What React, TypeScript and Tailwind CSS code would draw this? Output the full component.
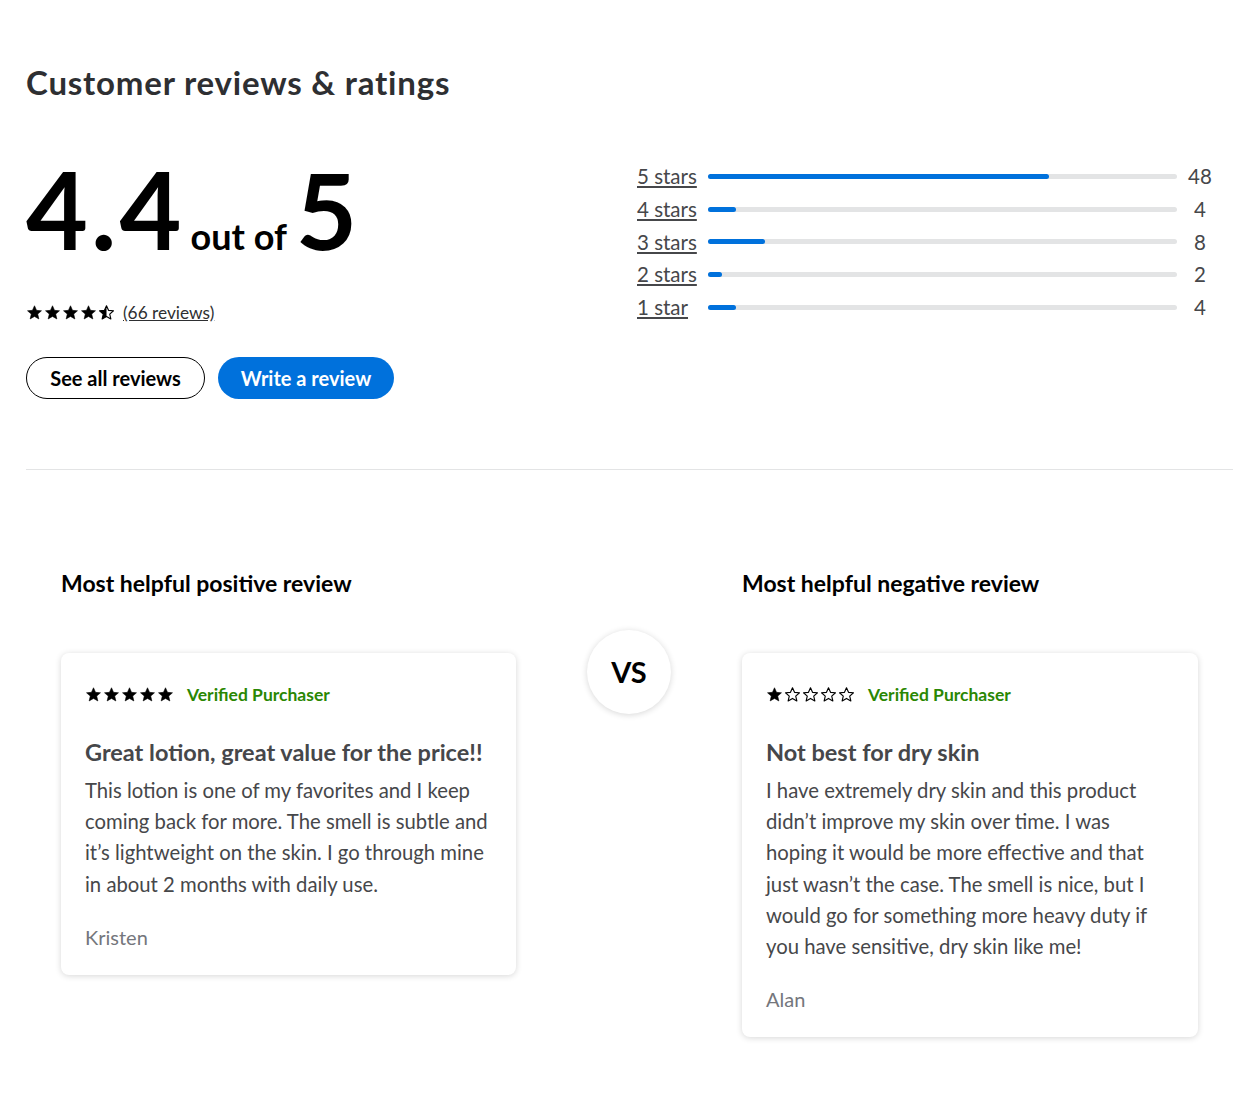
import React from "react";

const STAR = "M12 2.5l2.85 6.45 7.02.64-5.32 4.66 1.6 6.88L12 17.5l-6.15 3.63 1.6-6.88L2.13 9.59l7.02-.64z";

function Star({ type, size }: { type: "full" | "half" | "empty"; size: number }) {
  const id = React.useId();
  return (
    <svg width={size} height={size} viewBox="0 0 24 24" className="shrink-0">
      {type === "half" && (
        <defs>
          <clipPath id={id}>
            <rect x="0" y="0" width="12" height="24" />
          </clipPath>
        </defs>
      )}
      {type === "full" && <path d={STAR} fill="#000" stroke="#000" strokeWidth="0.8" strokeLinejoin="round" />}
      {type === "empty" && <path d={STAR} fill="none" stroke="#000" strokeWidth="1.6" strokeLinejoin="round" />}
      {type === "half" && (
        <>
          <path d={STAR} fill="none" stroke="#000" strokeWidth="1.6" strokeLinejoin="round" />
          <path d={STAR} fill="#000" clipPath={`url(#${id})`} />
        </>
      )}
    </svg>
  );
}

function Stars({ types, size }: { types: ("full" | "half" | "empty")[]; size: number }) {
  return (
    <div className="flex items-center gap-[1px]">
      {types.map((t, i) => (
        <Star key={i} type={t} size={size} />
      ))}
    </div>
  );
}

const rows = [
  { label: "5 stars", count: 48 },
  { label: "4 stars", count: 4 },
  { label: "3 stars", count: 8 },
  { label: "2 stars", count: 2 },
  { label: "1 star", count: 4 },
];

function ReviewCard({
  stars,
  title,
  body,
  author,
}: {
  stars: ("full" | "half" | "empty")[];
  title: string;
  body: string;
  author: string;
}) {
  return (
    <div className="rounded-lg bg-white px-6 pt-[32px] pb-[24px] shadow-[0_1px_6px_rgba(0,0,0,0.16)]">
      <div className="flex h-[20px] items-center gap-[13px]">
        <Stars types={stars} size={17} />
        <span className="text-[17.5px] font-bold leading-[20px] text-[#2a8703]">Verified Purchaser</span>
      </div>
      <h3 className="mt-[32px] text-[23.5px] font-bold leading-[30px] text-[#46474a]">{title}</h3>
      <p className="mt-[8px] text-[20.3px] leading-[31.2px] text-[#46474a]">{body}</p>
      <div className="mt-[23px] text-[20px] leading-[28px] text-[#74767c]">{author}</div>
    </div>
  );
}

export default function App() {
  return (
    <div className="min-h-[1094px] bg-white px-[26px] pt-[60px] text-[#2e2f32]" style={{ fontFamily: "Lato, 'Open Sans', sans-serif" }}>
      <h1 className="text-[33px] font-bold leading-[44px] tracking-[0.8px] text-[#2e2f32]">Customer reviews &amp; ratings</h1>

      <div className="mt-[55px] flex justify-between">
        <div>
          <div className="flex items-baseline text-black">
            <span className="text-[107px] font-bold leading-[100px] tracking-[3px]">4.4</span>
            <span className="ml-[6px] text-[36px] font-bold">out of</span>
            <span className="ml-[9px] text-[106px] font-bold leading-[100px]">5</span>
          </div>
          <div className="mt-[37px] flex items-center gap-[8px]">
            <Stars types={["full", "full", "full", "full", "half"]} size={17} />
            <a className="text-[17.3px] text-[#2e2f32] underline">(66 reviews)</a>
          </div>
          <div className="mt-[31px] flex gap-[13px]">
            <button className="h-[42px] w-[179px] rounded-full border border-black bg-white text-[20px] font-bold text-black">
              See all reviews
            </button>
            <button className="h-[42px] w-[176px] rounded-full bg-[#0071dc] text-[20px] font-bold text-white">
              Write a review
            </button>
          </div>
        </div>

        <div className="mr-[10px] mt-[1px] flex w-[586px] flex-col">
          {rows.map((r) => (
            <div key={r.label} className="flex h-[32.75px] items-center">
              <a className="w-[71px] text-[20.5px] text-[#46474a] underline">{r.label}</a>
              <div className="h-[5px] flex-1 rounded-full bg-[#e3e4e5]">
                <div className="h-full rounded-full bg-[#0071dc]" style={{ width: `${Math.max((r.count / 66) * 100, 3)}%` }} />
              </div>
              <span className="w-[46px] text-center text-[20.5px] text-[#46474a]">{r.count}</span>
            </div>
          ))}
        </div>
      </div>

      <div className="mt-[70px] h-px bg-[#e3e4e5]" />

      <div className="mx-[35px] mt-[98px] flex items-start">
        <div className="w-[455px]">
          <h2 className="text-[23px] font-bold leading-[30px] text-black">Most helpful positive review</h2>
          <div className="mt-[55px]">
            <ReviewCard
              stars={["full", "full", "full", "full", "full"]}
              title="Great lotion, great value for the price!!"
              body="This lotion is one of my favorites and I keep coming back for more. The smell is subtle and it’s lightweight on the skin. I go through mine in about 2 months with daily use."
              author="Kristen"
            />
          </div>
        </div>

        <div className="flex flex-1 justify-center pt-[62px]">
          <div className="flex h-[84px] w-[84px] items-center justify-center rounded-full bg-white shadow-[0_1px_6px_rgba(0,0,0,0.16)]">
            <span className="text-[29px] font-bold text-black">VS</span>
          </div>
        </div>

        <div className="w-[456px]">
          <h2 className="text-[23px] font-bold leading-[30px] text-black">Most helpful negative review</h2>
          <div className="mt-[55px]">
            <ReviewCard
              stars={["full", "empty", "empty", "empty", "empty"]}
              title="Not best for dry skin"
              body="I have extremely dry skin and this product didn’t improve my skin over time. I was hoping it would be more effective and that just wasn’t the case. The smell is nice, but I would go for something more heavy duty if you have sensitive, dry skin like me!"
              author="Alan"
            />
          </div>
        </div>
      </div>
    </div>
  );
}
